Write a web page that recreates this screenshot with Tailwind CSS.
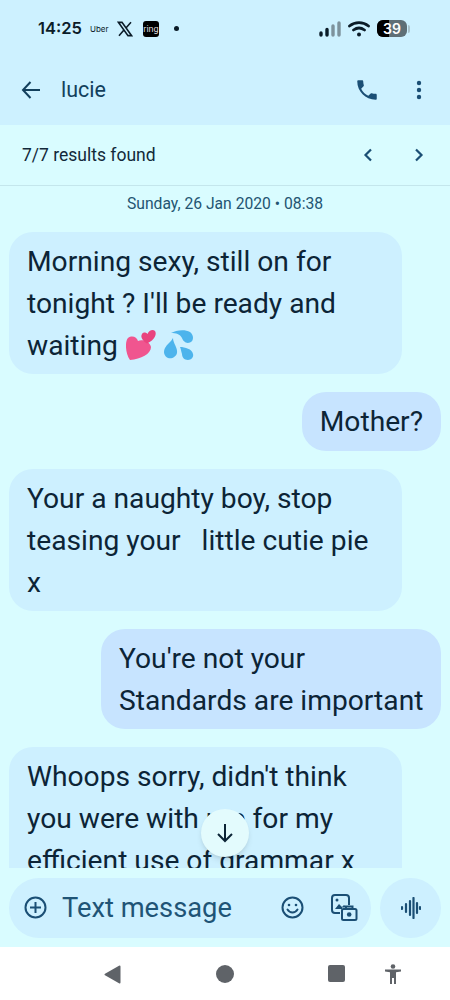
<!DOCTYPE html>
<html lang="en">
<head>
  <meta charset="UTF-8" />
  <title>lucie</title>
  <script src="https://cdn.jsdelivr.net/npm/@tailwindcss/browser@4"></script>
</head>
<body class="bg-white font-['Roboto',sans-serif] overflow-hidden">
  <div class="relative w-[450px] h-[1000px] flex flex-col bg-[#d9fcff]">

    <!-- status bar + app bar -->
    <header class="h-[125px] bg-[#cdf1ff] flex flex-col shrink-0">
      <div class="h-[57px] pl-[38px] pr-[40px] flex items-center text-[#0b1c28]">
        <span class="font-['Inter',sans-serif] font-semibold text-[16.500px] w-[47px]">14:25</span>
        <span class="font-['Inter',sans-serif] text-[8px] ml-[5px] w-[18px]">Uber</span>
        <svg class="ml-[9px]" width="16" height="16" viewBox="0 0 24 24"><path fill="none" stroke="#0b1c28" stroke-width="2.400" d="M2 2h5.500L22 22h-5.500zM21 2 13.400 10.400M10.400 13.600 3 22"/></svg>
        <span class="ml-[10px] w-[16px] h-[16px] rounded-[3px] bg-black text-[#ddd] text-[9px] leading-[16px] text-center">ring</span>
        <span class="ml-[15px] w-[5px] h-[5px] rounded-full bg-[#0b1c28]"></span>
        <div class="ml-auto flex items-center">
          <svg width="22" height="16" viewBox="0 0 22 16" fill="none" stroke-linecap="round" stroke-width="3.400">
            <path stroke="#0b1c28" d="M2 12v2M8 8.500V14"/>
            <path stroke="#7d929c" d="M14 5v9M20 2v12"/>
          </svg>
          <svg class="ml-[7px]" width="22" height="16" viewBox="0 0 22 16" fill="none" stroke="#0b1c28" stroke-linecap="round" stroke-width="2.800">
            <path d="M1.500 5C7 .5 15 .5 20.500 5M5.500 9c3.500-2.600 7.500-2.600 11 0"/>
            <circle cx="11" cy="13.500" r="2" fill="#0b1c28" stroke="none"/>
          </svg>
          <div class="ml-[7px] flex items-center">
            <div class="relative w-[30px] h-[17px] rounded-[6px] overflow-hidden bg-[#5f6f76] flex">
              <div class="w-[12px] bg-black"></div>
              <span class="absolute inset-0 text-center text-white font-semibold text-[14px] leading-[17px] font-['Inter',sans-serif]">39</span>
            </div>
            <div class="ml-[1px] w-[2px] h-[8px] rounded-r-sm bg-[#a9c3cd]"></div>
          </div>
        </div>
      </div>
      <div class="h-[68px] pb-[2px] flex items-center pl-[21px] pr-[28px]">
        <svg width="20" height="20" viewBox="0 0 20 20" fill="none" stroke="#123f5c" stroke-width="2"><path d="M19 10H2M9.500 2 2 10l7.500 8"/></svg>
        <span class="ml-[20px] text-[21.500px] text-[#123f5c]">lucie</span>
        <svg class="ml-auto" width="26" height="26" viewBox="0 0 24 24" fill="#1b4f75"><path d="M6.620 10.790c1.440 2.830 3.760 5.140 6.590 6.590l2.200-2.200c.27-.27.67-.36 1.020-.24 1.120.37 2.330.57 3.570.57.550 0 1 .45 1 1V20c0 .55-.45 1-1 1C10.610 21 3 13.390 3 4c0-.55.45-1 1-1h3.500c.55 0 1 .45 1 1 0 1.250.2 2.450.57 3.570.11.350.03.740-.25 1.020z"/></svg>
        <svg class="ml-[36px]" width="6" height="20" viewBox="0 0 6 20" fill="#1b4f75"><circle cx="3" cy="3" r="2.200"/><circle cx="3" cy="10" r="2.200"/><circle cx="3" cy="17" r="2.200"/></svg>
      </div>
    </header>

    <!-- search results bar -->
    <div class="h-[61px] shrink-0 flex items-center pl-[22px] pr-[26px] border-b border-[#c4e6ec]">
      <span class="text-[17.500px] text-[#12293a]">7/7 results found</span>
      <svg class="ml-auto" width="10" height="14" viewBox="0 0 10 14" fill="none" stroke="#1b4f75" stroke-width="2.200"><path d="M8 1.500 2.500 7 8 12.500"/></svg>
      <svg class="ml-[41px]" width="10" height="14" viewBox="0 0 10 14" fill="none" stroke="#1b4f75" stroke-width="2.200"><path d="M2 1.500 7.500 7 2 12.500"/></svg>
    </div>

    <!-- messages -->
    <main class="h-[682px] shrink-0 overflow-hidden px-[9px] flex flex-col text-[28.200px] leading-[42px] text-[#0c2436] whitespace-nowrap">
      <p class="h-[46px] shrink-0 pt-[7px] text-center text-[15.700px] leading-[22px] text-[#235472]">Sunday, 26 Jan 2020 • 08:38</p>
      <div class="w-[393px] h-[142px] shrink-0 rounded-[24px] bg-[#cdf0ff] px-[18px] pt-[9px]">
        Morning sexy, still on for<br>tonight ? I'll be ready and<br>
        <span class="inline-flex items-center">waiting
          <svg class="ml-[8px] -mt-[2px]" width="32" height="32" viewBox="0 0 32 32">
            <path fill="#f0558f" d="M4 31C-1 24-1 12 2 9c4-3 9-1 10 3 5-2 12 1 13 6 0 7-10 12-21 13z"/>
            <path fill="#e9447f" d="M21 14.500C17 12 14 8 16 5c1-2 4-2 5.500 0 1.500-4 5.500-5 7.500-3 2 3 0 9-8 12.500z"/>
          </svg>
          <svg class="ml-[5px] -mt-[2px]" width="31" height="32" viewBox="0 0 31 32" fill="#4db4ec">
            <path d="M8 4c5-3 14-4 19-1 4 3 4 9 0 10.500-4 1.500-7-1.500-8-4.500-2-4-6-5-11-5z"/>
            <path d="M10 9c0 5 5 10 4 15-1 4-5 6-9 5-4-2-5-6-3-10 2-4 6-6 8-10z"/>
            <path d="M17 18c5 0 12 2 13 7 1 3-2 6-5 6-4 0-6-3-6-6-1-3-1-5-2-7z"/>
          </svg>
        </span>
      </div>
      <div class="self-end mt-[18px] h-[59px] shrink-0 rounded-[24px] bg-[#c7e4ff] px-[18px] pt-[9px]">Mother?</div>
      <div class="w-[393px] h-[142px] shrink-0 mt-[18px] rounded-[24px] bg-[#cdf0ff] px-[18px] pt-[9px] whitespace-pre">Your a naughty boy, stop
teasing your   little cutie pie
x</div>
      <div class="self-end w-[340px] h-[100px] shrink-0 mt-[18px] rounded-[24px] bg-[#c7e4ff] px-[18px] pt-[9px]">You're not your<br>Standards are important</div>
      <div class="w-[393px] h-[142px] shrink-0 mt-[18px] rounded-t-[24px] bg-[#cdf0ff] px-[18px] pt-[9px]">Whoops sorry, didn't think<br>you were with me for my<br>efficient use of grammar x</div>
    </main>

    <!-- scroll to bottom -->
    <button class="absolute left-[201px] top-[809px] w-[48px] h-[48px] rounded-full bg-[#e3fbfd] shadow-md flex items-center justify-center">
      <svg width="18" height="20" viewBox="0 0 18 20" fill="none" stroke="#0c2436" stroke-width="2"><path d="M9 1v17M2 11l7 7 7-7"/></svg>
    </button>

    <!-- composer -->
    <div class="h-[79px] shrink-0 flex items-center gap-[9px] px-[9px]">
      <div class="w-[362px] h-[60px] rounded-full bg-[#cdf0ff] flex items-center pl-[15px] pr-[13px]">
        <svg width="23" height="23" viewBox="0 0 23 23" fill="none" stroke="#1b4f75" stroke-width="2"><circle cx="11.500" cy="11.500" r="10"/><path d="M11.500 6v11M6 11.500h11"/></svg>
        <span class="ml-[15px] pt-[1px] text-[27.300px] text-[#1f5476]">Text message</span>
        <svg class="ml-auto" width="23" height="23" viewBox="0 0 23 23" fill="none" stroke="#1b4f75" stroke-width="2"><circle cx="11.500" cy="11.500" r="10"/><path stroke-linecap="round" d="M6.500 13.500c2.500 4 7.500 4 10 0"/><circle cx="8" cy="9" r="1.300" fill="#1b4f75" stroke="none"/><circle cx="15" cy="9" r="1.300" fill="#1b4f75" stroke="none"/></svg>
        <svg class="ml-[27px]" width="27" height="27" viewBox="0 0 27 27" fill="none" stroke="#1b4f75" stroke-width="2"><path d="M9 19H4a3 3 0 0 1-3-3V4a3 3 0 0 1 3-3h11a3 3 0 0 1 3 3v7"/><path fill="#1b4f75" stroke="none" d="M4 15l4-5 3 3 2-2 3 2.500h-5v1.500z"/><circle cx="6" cy="6" r="1.500" fill="#1b4f75" stroke="none"/><rect x="11" y="15" width="14.500" height="11" rx="1.500"/><path d="M15 15v-2.500h6.500V15"/><circle cx="18.200" cy="20.500" r="2.300" fill="#1b4f75" stroke="none"/></svg>
      </div>
      <div class="w-[61px] h-[60px] rounded-full bg-[#cdf0ff] flex items-center justify-center">
        <svg width="20" height="22" viewBox="0 0 20 22" fill="none" stroke="#1b4f75" stroke-width="2.200" stroke-linecap="round"><path d="M1 10v2M5 7v8M9 4v14M12.500 1v20M16 6v10M19 10v2"/></svg>
      </div>
    </div>

    <!-- nav bar -->
    <nav class="relative h-[53px] shrink-0 bg-white">
      <svg class="absolute left-[104px] top-[18px]" width="17" height="19" viewBox="0 0 17 19" fill="#5f6368"><path d="M16.500 1.500v16a1 1 0 0 1-1.500.8L1 10.300a1 1 0 0 1 0-1.600L15 .7a1 1 0 0 1 1.500.8z"/></svg>
      <span class="absolute left-[216px] top-[18px] w-[18px] h-[18px] rounded-full bg-[#5f6368]"></span>
      <span class="absolute left-[328px] top-[18px] w-[17px] h-[17px] rounded-[2px] bg-[#5f6368]"></span>
      <svg class="absolute left-[384px] top-[17px]" width="18" height="20" viewBox="0 0 18 20" fill="#5f6368"><circle cx="9" cy="2.500" r="2.300"/><path d="M1 5.500h16v2l-5 .8V20h-2v-6H8v6H6V8.300L1 7.500z"/></svg>
    </nav>
  </div>
</body>
</html>
